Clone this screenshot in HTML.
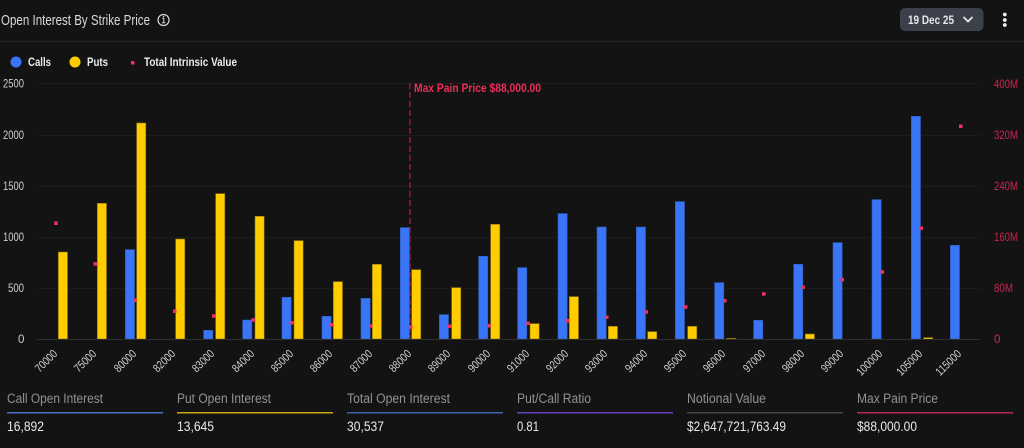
<!DOCTYPE html>
<html><head><meta charset="utf-8"><style>
html,body{margin:0;padding:0;background:#131313;width:1024px;height:448px;overflow:hidden}
svg{display:block;font-family:"Liberation Sans",sans-serif}
.c{fill:#3a75f7;stroke:#2d5ab8;stroke-width:.6}.p{fill:#ffcc00;stroke:#8a7012;stroke-width:.6}
.d{fill:#f0305f}
.g{stroke:#1c1c1c;stroke-width:1}
.yl{fill:#cfcfcf;font-size:11.500px}
.yr{fill:#cc2450;font-size:11.500px}
.xl{fill:#d2d2d2;font-size:11.500px}
.sl{fill:#929292;font-size:13.500px}
.sv{fill:#e8e8e8;font-size:13.500px}
.lg{fill:#ececec;font-size:11.500px;font-weight:bold}
</style></head><body>
<svg width="1024" height="448" viewBox="0 0 1024 448" xmlns="http://www.w3.org/2000/svg">
<rect width="1024" height="448" fill="#131313"/>
<text x="1" y="25" font-size="14.500" fill="#dadada" textLength="149" lengthAdjust="spacingAndGlyphs">Open Interest By Strike Price</text>
<circle cx="163.500" cy="20" r="5.500" fill="none" stroke="#d8d8d8" stroke-width="1.200"/>
<path d="M162.300 18.200h1.500v4.300M162 22.700h3.200" fill="none" stroke="#d8d8d8" stroke-width="1"/>
<circle cx="163.600" cy="16.600" r=".7" fill="#d8d8d8"/>
<rect x="900" y="8" width="83.500" height="23" rx="5" fill="#3b404a"/>
<text x="908" y="24" font-size="12" font-weight="bold" fill="#e6e8ec" textLength="46" lengthAdjust="spacingAndGlyphs">19 Dec 25</text>
<path d="M963.500 17l4.500 4.500 4.500-4.500" fill="none" stroke="#e8e8e8" stroke-width="1.700"/>
<circle cx="1004.800" cy="14.500" r="1.900" fill="#f0f0f0"/><circle cx="1004.800" cy="20" r="1.900" fill="#f0f0f0"/><circle cx="1004.800" cy="25" r="1.900" fill="#f0f0f0"/>
<line x1="0" y1="41.500" x2="1024" y2="41.500" stroke="#242424"/>

<circle cx="16" cy="62" r="5.500" fill="#3a75f7"/>
<text class="lg" x="28" y="66" textLength="23" lengthAdjust="spacingAndGlyphs">Calls</text>
<circle cx="75" cy="62" r="5.500" fill="#ffcc00"/>
<text class="lg" x="87" y="66" textLength="21" lengthAdjust="spacingAndGlyphs">Puts</text>
<rect x="131" y="61" width="3.500" height="3.500" fill="#f0305f"/>
<text class="lg" x="144" y="66" textLength="93" lengthAdjust="spacingAndGlyphs">Total Intrinsic Value</text>

<g class="g">
<line x1="37" y1="83.500" x2="980" y2="83.500"/>
<line x1="37" y1="135.500" x2="980" y2="135.500"/>
<line x1="37" y1="186.500" x2="980" y2="186.500"/>
<line x1="37" y1="237.500" x2="980" y2="237.500"/>
<line x1="37" y1="288.500" x2="980" y2="288.500"/>
</g>

<g class="yl">
<text x="3" y="87.500" textLength="21" lengthAdjust="spacingAndGlyphs">2500</text>
<text x="3" y="139" textLength="21" lengthAdjust="spacingAndGlyphs">2000</text>
<text x="3" y="190" textLength="21" lengthAdjust="spacingAndGlyphs">1500</text>
<text x="3" y="241" textLength="21" lengthAdjust="spacingAndGlyphs">1000</text>
<text x="8" y="292" textLength="16" lengthAdjust="spacingAndGlyphs">500</text>
<text x="18" y="343">0</text>
</g>
<g class="yr">
<text x="994" y="88" textLength="24" lengthAdjust="spacingAndGlyphs">400M</text>
<text x="994" y="139" textLength="24" lengthAdjust="spacingAndGlyphs">320M</text>
<text x="994" y="190" textLength="24" lengthAdjust="spacingAndGlyphs">240M</text>
<text x="994" y="241" textLength="24" lengthAdjust="spacingAndGlyphs">160M</text>
<text x="994" y="292" textLength="19" lengthAdjust="spacingAndGlyphs">80M</text>
<text x="994" y="343">0</text>
</g>

<g class="c">
<rect x="125.300" y="249.600" width="9.200" height="89.400"/>
<rect x="203.600" y="330.300" width="9.200" height="8.700"/>
<rect x="242.600" y="320" width="9.200" height="19"/>
<rect x="282" y="297.300" width="9.200" height="41.700"/>
<rect x="322" y="316.300" width="9.200" height="22.700"/>
<rect x="361" y="298.300" width="9.200" height="40.700"/>
<rect x="400.300" y="227.600" width="9.200" height="111.400"/>
<rect x="439.300" y="314.600" width="9.200" height="24.400"/>
<rect x="478.600" y="256.300" width="9.200" height="82.700"/>
<rect x="517.600" y="267.600" width="9.200" height="71.400"/>
<rect x="558" y="213.600" width="9.200" height="125.400"/>
<rect x="597" y="227" width="9.200" height="112"/>
<rect x="636.300" y="227" width="9.200" height="112"/>
<rect x="675.300" y="201.600" width="9.200" height="137.400"/>
<rect x="714.600" y="282.600" width="9.200" height="56.400"/>
<rect x="753.600" y="320.300" width="9.200" height="18.700"/>
<rect x="793.600" y="264.300" width="9.200" height="74.700"/>
<rect x="833" y="242.600" width="9.200" height="96.400"/>
<rect x="872" y="199.600" width="9.200" height="139.400"/>
<rect x="911.300" y="116.300" width="9.200" height="222.700"/>
<rect x="950.300" y="245.300" width="9.200" height="93.700"/>
</g>
<g class="p">
<rect x="58.300" y="252" width="9.200" height="87"/>
<rect x="97.300" y="203.300" width="9.200" height="135.700"/>
<rect x="136.600" y="123" width="9.200" height="216"/>
<rect x="175.600" y="239" width="9.200" height="100"/>
<rect x="215.600" y="193.600" width="9.200" height="145.400"/>
<rect x="255" y="216.300" width="9.200" height="122.700"/>
<rect x="294" y="240.600" width="9.200" height="98.400"/>
<rect x="333.300" y="281.600" width="9.200" height="57.400"/>
<rect x="372.300" y="264.300" width="9.200" height="74.700"/>
<rect x="411.600" y="269.600" width="9.200" height="69.400"/>
<rect x="451.600" y="287.600" width="9.200" height="51.400"/>
<rect x="490.600" y="224.300" width="9.200" height="114.700"/>
<rect x="530" y="323.600" width="9.200" height="15.400"/>
<rect x="569.300" y="296.600" width="9.200" height="42.400"/>
<rect x="608.300" y="326.300" width="9.200" height="12.700"/>
<rect x="647.600" y="331.600" width="9.200" height="7.400"/>
<rect x="687.600" y="326.300" width="9.200" height="12.700"/>
<rect x="726.600" y="338.300" width="9.200" height=".7"/>
<rect x="805.300" y="334" width="9.200" height="5"/>
<rect x="923.600" y="337.600" width="9.200" height="1.400"/>
</g>
<line x1="37" y1="339.500" x2="980" y2="339.500" stroke="#2e2e2e"/>

<line x1="410" y1="83" x2="410" y2="339" stroke="#8f1f44" stroke-width="1.400" stroke-dasharray="6 3"/>
<text x="414" y="92" font-size="11.500" font-weight="bold" fill="#ea2e58" textLength="127" lengthAdjust="spacingAndGlyphs">Max Pain Price $88,000.00</text>

<g class="d">
<rect x="54.200" y="221.500" width="3.500" height="3.500"/>
<rect x="93.500" y="262.200" width="3.500" height="3.500"/>
<rect x="133" y="298.500" width="3.500" height="3.500"/>
<rect x="173" y="309.500" width="3.500" height="3.500"/>
<rect x="212" y="314.200" width="3.500" height="3.500"/>
<rect x="251.300" y="318.200" width="3.500" height="3.500"/>
<rect x="290.300" y="321" width="3.500" height="3.500"/>
<rect x="329.500" y="323" width="3.500" height="3.500"/>
<rect x="369" y="324.200" width="3.500" height="3.500"/>
<rect x="409" y="325.200" width="3.500" height="3.500"/>
<rect x="448" y="324.500" width="3.500" height="3.500"/>
<rect x="487.300" y="324" width="3.500" height="3.500"/>
<rect x="526.300" y="321.500" width="3.500" height="3.500"/>
<rect x="565.500" y="319" width="3.500" height="3.500"/>
<rect x="605" y="315.500" width="3.500" height="3.500"/>
<rect x="644.500" y="310.200" width="3.500" height="3.500"/>
<rect x="684" y="305.200" width="3.500" height="3.500"/>
<rect x="723" y="299" width="3.500" height="3.500"/>
<rect x="762" y="292.200" width="3.500" height="3.500"/>
<rect x="801.300" y="285.500" width="3.500" height="3.500"/>
<rect x="840.500" y="278" width="3.500" height="3.500"/>
<rect x="880.500" y="270.200" width="3.500" height="3.500"/>
<rect x="919.500" y="226.500" width="3.500" height="3.500"/>
<rect x="959" y="124.500" width="3.500" height="3.500"/>
</g>

<g class="xl" text-anchor="end">
<text transform="translate(58,354.500) rotate(-45)" textLength="26" lengthAdjust="spacingAndGlyphs">70000</text>
<text transform="translate(97,354.500) rotate(-45)" textLength="26" lengthAdjust="spacingAndGlyphs">75000</text>
<text transform="translate(137,354.500) rotate(-45)" textLength="26" lengthAdjust="spacingAndGlyphs">80000</text>
<text transform="translate(176,354.500) rotate(-45)" textLength="26" lengthAdjust="spacingAndGlyphs">82000</text>
<text transform="translate(215,354.500) rotate(-45)" textLength="26" lengthAdjust="spacingAndGlyphs">83000</text>
<text transform="translate(255,354.500) rotate(-45)" textLength="26" lengthAdjust="spacingAndGlyphs">84000</text>
<text transform="translate(294,354.500) rotate(-45)" textLength="26" lengthAdjust="spacingAndGlyphs">85000</text>
<text transform="translate(333,354.500) rotate(-45)" textLength="26" lengthAdjust="spacingAndGlyphs">86000</text>
<text transform="translate(373,354.500) rotate(-45)" textLength="26" lengthAdjust="spacingAndGlyphs">87000</text>
<text transform="translate(412,354.500) rotate(-45)" textLength="26" lengthAdjust="spacingAndGlyphs">88000</text>
<text transform="translate(451,354.500) rotate(-45)" textLength="26" lengthAdjust="spacingAndGlyphs">89000</text>
<text transform="translate(491,354.500) rotate(-45)" textLength="26" lengthAdjust="spacingAndGlyphs">90000</text>
<text transform="translate(530,354.500) rotate(-45)" textLength="26" lengthAdjust="spacingAndGlyphs">91000</text>
<text transform="translate(569,354.500) rotate(-45)" textLength="26" lengthAdjust="spacingAndGlyphs">92000</text>
<text transform="translate(608,354.500) rotate(-45)" textLength="26" lengthAdjust="spacingAndGlyphs">93000</text>
<text transform="translate(648,354.500) rotate(-45)" textLength="26" lengthAdjust="spacingAndGlyphs">94000</text>
<text transform="translate(687,354.500) rotate(-45)" textLength="26" lengthAdjust="spacingAndGlyphs">95000</text>
<text transform="translate(726,354.500) rotate(-45)" textLength="26" lengthAdjust="spacingAndGlyphs">96000</text>
<text transform="translate(766,354.500) rotate(-45)" textLength="26" lengthAdjust="spacingAndGlyphs">97000</text>
<text transform="translate(805,354.500) rotate(-45)" textLength="26" lengthAdjust="spacingAndGlyphs">98000</text>
<text transform="translate(844,354.500) rotate(-45)" textLength="26" lengthAdjust="spacingAndGlyphs">99000</text>
<text transform="translate(883,354.500) rotate(-45)" textLength="31" lengthAdjust="spacingAndGlyphs">100000</text>
<text transform="translate(923,354.500) rotate(-45)" textLength="31" lengthAdjust="spacingAndGlyphs">105000</text>
<text transform="translate(962,354.500) rotate(-45)" textLength="31" lengthAdjust="spacingAndGlyphs">115000</text>
</g>

<text class="sl" x="7" y="403" textLength="96" lengthAdjust="spacingAndGlyphs">Call Open Interest</text>
<rect x="7" y="412" width="156" height="1.500" fill="#4a6fc4"/>
<text class="sv" x="7" y="431" textLength="37" lengthAdjust="spacingAndGlyphs">16,892</text>

<text class="sl" x="177" y="403" textLength="94" lengthAdjust="spacingAndGlyphs">Put Open Interest</text>
<rect x="177" y="412" width="156" height="1.500" fill="#c9a413"/>
<text class="sv" x="177" y="431" textLength="37" lengthAdjust="spacingAndGlyphs">13,645</text>

<text class="sl" x="347" y="403" textLength="103" lengthAdjust="spacingAndGlyphs">Total Open Interest</text>
<rect x="347" y="412" width="156" height="1.500" fill="#3f62b0"/>
<text class="sv" x="347" y="431" textLength="37" lengthAdjust="spacingAndGlyphs">30,537</text>

<text class="sl" x="517" y="403" textLength="74" lengthAdjust="spacingAndGlyphs">Put/Call Ratio</text>
<rect x="517" y="412" width="156" height="1.500" fill="#6440b8"/>
<text class="sv" x="517" y="431" textLength="22" lengthAdjust="spacingAndGlyphs">0.81</text>

<text class="sl" x="687" y="403" textLength="79" lengthAdjust="spacingAndGlyphs">Notional Value</text>
<rect x="687" y="412" width="156" height="1.500" fill="#43464c"/>
<text class="sv" x="687" y="431" textLength="99" lengthAdjust="spacingAndGlyphs">$2,647,721,763.49</text>

<text class="sl" x="857" y="403" textLength="81" lengthAdjust="spacingAndGlyphs">Max Pain Price</text>
<rect x="857" y="412" width="156" height="1.500" fill="#b52a4e"/>
<text class="sv" x="857" y="431" textLength="60" lengthAdjust="spacingAndGlyphs">$88,000.00</text>
</svg>
</body></html>
